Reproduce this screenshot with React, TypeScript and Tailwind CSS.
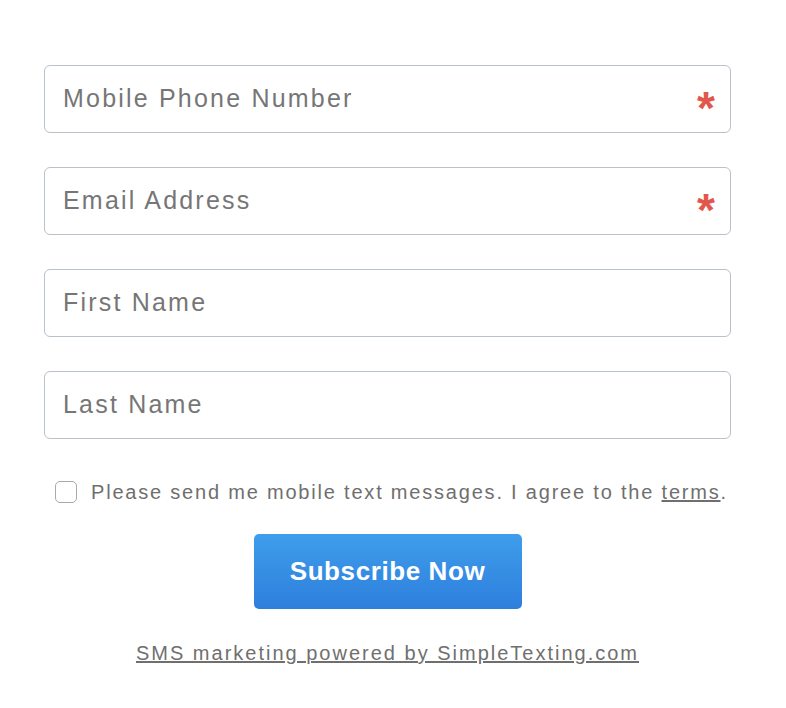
import { useState } from 'react'

const fields = [
  { label: 'Mobile Phone Number', required: true },
  { label: 'Email Address', required: true },
  { label: 'First Name', required: false },
  { label: 'Last Name', required: false },
]

export default function App() {
  const [agree, setAgree] = useState(false)

  return (
    <div className="min-h-screen w-[786px] bg-white pl-[44px] pr-[55px] pt-[65px] font-['Liberation_Sans',Arial,sans-serif]">
      <div className="flex flex-col gap-[34px]">
        {fields.map((f) => (
          <div
            key={f.label}
            className="flex h-[68px] items-center justify-between rounded-[6px] border border-[#b9c1ca] pl-[18px] pr-[15px]"
          >
            <span className="text-[25px] tracking-[2.2px] text-[#767676]">{f.label}</span>
            {f.required && (
              <span className="mt-[17px] text-[46px] font-bold leading-none text-[#e2574c]">*</span>
            )}
          </div>
        ))}
      </div>

      <label className="mt-[38px] flex items-center gap-[14px] pl-[11px] text-[20px] tracking-[1.8px] text-[#6f6f6f]">
        <input
          type="checkbox"
          checked={agree}
          onChange={(e) => setAgree(e.target.checked)}
          className="h-[22px] w-[22px] shrink-0 appearance-none rounded-[5px] border border-[#a9a9a9] bg-white"
        />
        <span>
          Please send me mobile text messages. I agree to the <span className="underline">terms</span>.
        </span>
      </label>

      <div className="mt-[27px] flex justify-center">
        <button className="h-[75px] w-[268px] rounded-[5px] bg-gradient-to-b from-[#3f9deb] to-[#2e7fdc] text-[26px] font-bold tracking-[0.6px] text-white">
          Subscribe Now
        </button>
      </div>

      <div className="mt-[29px] text-center text-[20px] tracking-[2px] text-[#6f6f6f] underline">
        SMS marketing powered by SimpleTexting.com
      </div>
    </div>
  )
}
